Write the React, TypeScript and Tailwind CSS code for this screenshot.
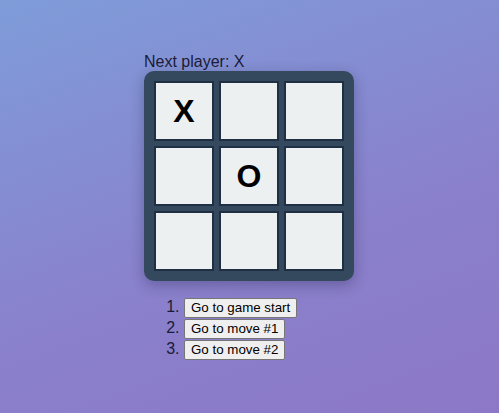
import { useState } from "react";

type Cell = "X" | "O" | null;

function Square({ value, onClick }: { value: Cell; onClick: () => void }) {
  return (
    <button
      onClick={onClick}
      className="flex h-[60px] w-[60px] items-center justify-center border-2 border-[#1f3044] bg-[#ecf0f1] text-[32px] font-bold leading-none text-black"
    >
      {value}
    </button>
  );
}

export default function App() {
  const [history, setHistory] = useState<Cell[][]>([
    Array(9).fill(null),
    ["X", null, null, null, null, null, null, null, null],
    ["X", null, null, null, "O", null, null, null, null],
  ]);
  const [move, setMove] = useState(2);
  const squares = history[move];
  const xNext = move % 2 === 0;

  const play = (i: number) => {
    if (squares[i]) return;
    const next = squares.slice();
    next[i] = xNext ? "X" : "O";
    setHistory([...history.slice(0, move + 1), next]);
    setMove(move + 1);
  };

  return (
    <div
      className="flex min-h-screen items-center justify-center bg-[linear-gradient(160deg,#7f9cd9_0%,#8a80cb_60%,#8c78c6_100%)] text-[#1b1b35]"
      style={{ fontFamily: "'Liberation Sans', Arial, sans-serif" }}
    >
      <div className="ml-[-1px] w-[210px]">
        <div className="text-base leading-[19px]">Next player: {xNext ? "X" : "O"}</div>
        <div className="grid grid-cols-3 gap-[5px] rounded-[10px] bg-[#34495e] p-[10px] shadow-[0_4px_14px_rgba(20,20,60,0.3)]">
          {squares.map((v, i) => (
            <Square key={i} value={v} onClick={() => play(i)} />
          ))}
        </div>
        <ol className="mt-[17px] list-decimal pl-10 text-base leading-[18px]">
          {history.map((_, m) => (
            <li key={m} className="h-[21px]">
              <button
                onClick={() => setMove(m)}
                className="rounded-[2px] border border-[#767676] bg-[#efefef] px-[6px] py-px text-[13.33px] leading-[16px] text-black"
              >
                {m === 0 ? "Go to game start" : `Go to move #${m}`}
              </button>
            </li>
          ))}
        </ol>
      </div>
    </div>
  );
}
